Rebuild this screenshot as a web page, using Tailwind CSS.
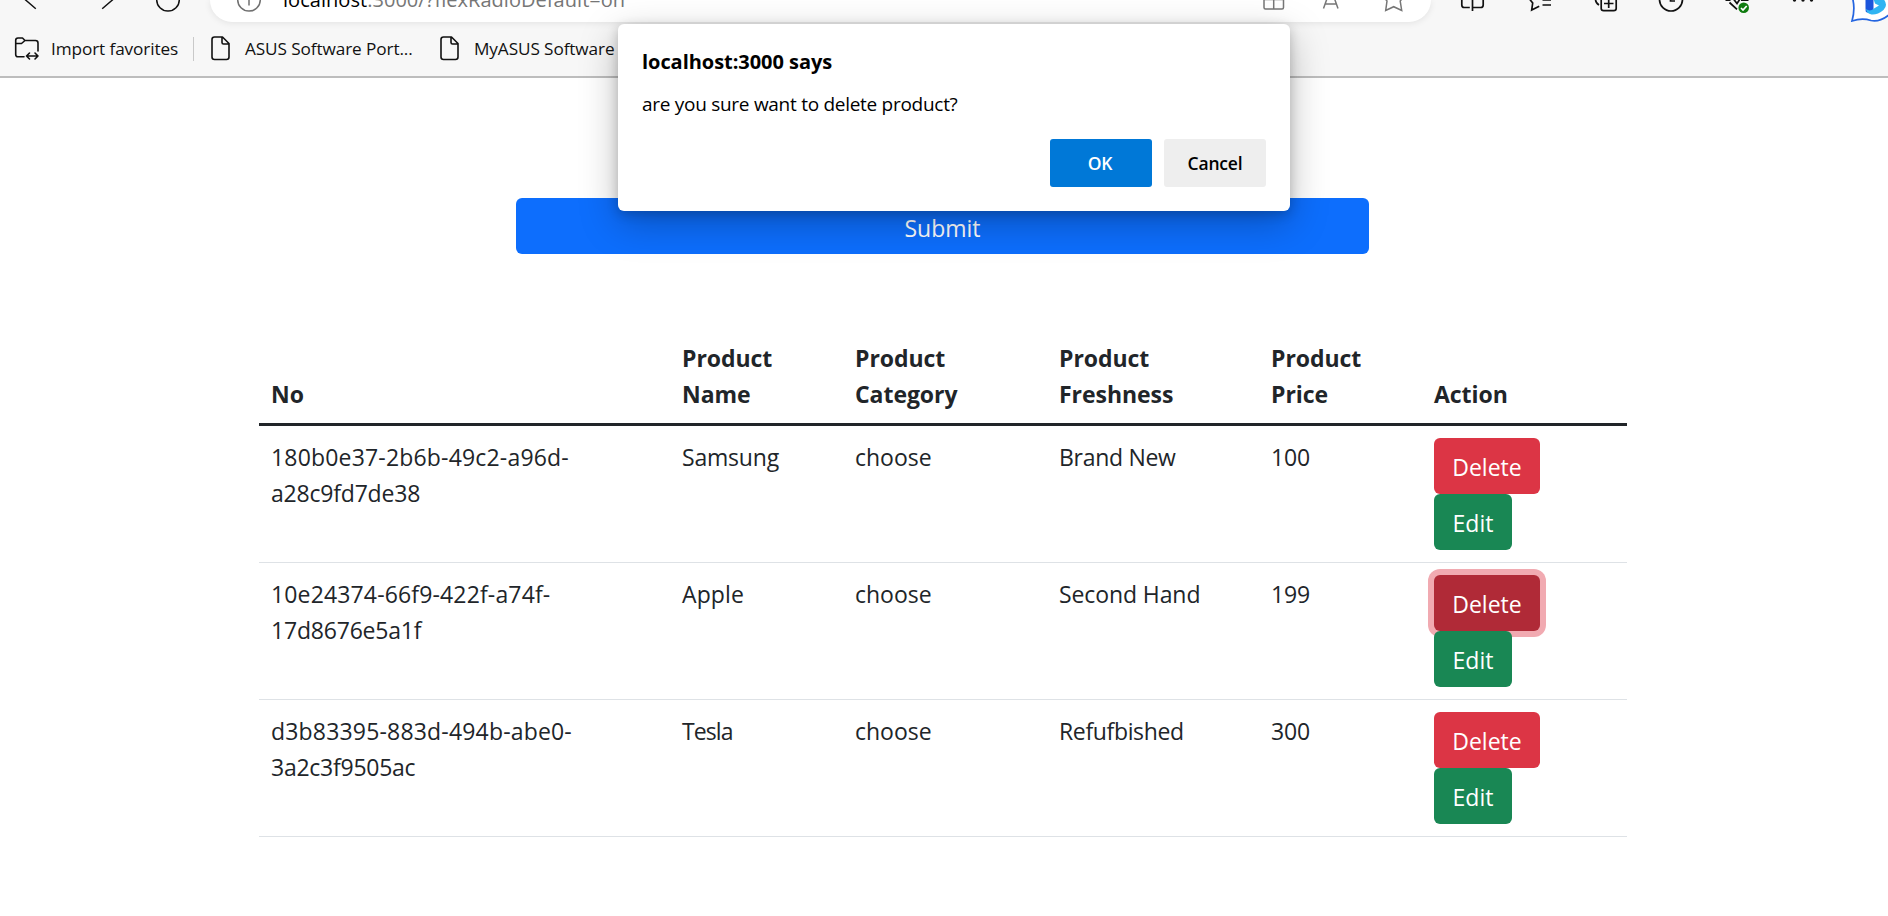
<!DOCTYPE html>
<html lang="en">
<head>
<meta charset="utf-8">
<title>Products</title>
<script src="https://cdn.jsdelivr.net/npm/@tailwindcss/browser@4"></script>
</head>
<body class="relative h-[916px] overflow-hidden bg-white font-['Open_Sans',sans-serif] text-[23px] leading-[36px] text-[#212529]">
<header class="h-[78px] border-b-2 border-[#bdbdbd] bg-[#f7f7f7]">
  <div class="flex h-[22px]">
    <svg class="h-[22px] w-[210px] shrink-0" viewBox="0 0 210 22" fill="none" stroke="#111" stroke-width="1.5"><path d="M25 -.5L35.8 8.7M113 -.5L102.2 8.7"/><circle cx="168" cy="-.2" r="11.3"/></svg>
    <div class="flex h-[22px] w-[1221px] shrink-0 rounded-b-[22px] bg-white shadow-[0_1px_7px_rgba(0,0,0,0.09)]">
      <svg class="h-[22px] w-[73px] shrink-0" viewBox="210 0 73 22" fill="none" stroke="#707070" stroke-width="1.5"><circle cx="249" cy="-.2" r="11.3"/><path d="M249 -1V5.5"/></svg>
      <div class="-mt-[15px] h-[30px] w-[960px] whitespace-nowrap text-[20px] leading-[30px] tracking-[0.04px] text-[#767676]"><span class="text-black">localhost</span>:3000/?flexRadioDefault=on</div>
      <svg class="h-[22px] w-[160px] shrink-0" viewBox="1243 0 160 22" fill="none" stroke="#767676" stroke-width="1.5"><path d="M1264 -2V7.5q0 1.5 1.5 1.5h16.5q1.5 0 1.5-1.5V-2M1273.700 -2V9M1264 -.5h19.500M1323.500 8.500L1329 -7M1338 8.500L1332.500 -7M1325.500 4h10.500M1384.500 -2l2.500 3-1.300 9.500 8-3.800 8 3.800-1.500-9.500 2.500-3"/></svg>
    </div>
    <svg class="h-[22px] w-[457px] shrink-0" viewBox="1431 0 457 22" fill="none" stroke="#111" stroke-width="1.700">
      <path d="M1461.800 -1V5q0 2.500 2.500 2.500h5.500M1483.200 -1V5q0 2.500-2.500 2.500h-7.500M1472.500 -1V11"/>
      <path d="M1529.500 -1l3.200 4-1 7 7.500-3.800M1542.500 5h8.500M1542.500 -.2h8.500"/>
      <path d="M1595.500 -1q0 4 3.500 6M1601.200 -1V8.500q0 2.200 2.500 2.200h10q2.500 0 2.500-2.200V-1M1608.700 -1v9M1604 3.500h9.500"/>
      <circle cx="1671" cy="-.5" r="11.500"/><path d="M1670.500 -1v2h4.500"/>
      <path d="M1725.500 .2h5M1733.500 -1l3.500 4.500 3-4.500M1741 .2h7.500M1729.500 2.500l7.500 6.800"/>
      <circle cx="1743.700" cy="7.800" r="5.300" fill="#107c10" stroke="none"/><path d="M1741 8l2 2 3.700-4" stroke="#fff"/>
      <g fill="#111" stroke="none"><circle cx="1794.500" cy="0" r="1.700"/><circle cx="1803" cy="0" r="1.700"/><circle cx="1811.500" cy="0" r="1.700"/></g>
      <path d="M1852.500 -2Q1855.500 9 1852 21Q1862 17.500 1871 20.500Q1880 22.500 1890 14V-2" fill="#fff" stroke="#2465e0"/>
      <path d="M1865.500 -1h8v11q-4 4-7.500 2-.5-1-.5-4z" fill="#1c55dc" stroke="none"/>
      <path d="M1866 9q4 3 8-.5l5-3-4-2-1.500-4.500h10q5 6 0 11-6 5-12 4.500-5-1-5.500-5.500z" fill="#2fb4f2" stroke="none"/>
    </svg>
  </div>
  <div class="flex h-[53px] items-center text-[17.200px] leading-[24px] tracking-[-0.100px] text-[#111]">
    <svg class="ml-[14px] h-[25px] w-[26px]" viewBox="14 36 26 25" fill="none" stroke="#111" stroke-width="1.600" stroke-linecap="round" stroke-linejoin="round"><path d="M24 56.800H18q-2.300 0-2.300-2.300V40.300q0-2.300 2.300-2.300h4.500l2.500 2.500h10.500q2.500 0 2.500 2.500v8M15.700 43.500h5.800l3.500-3M26.500 56h11.500M29.500 53l-3 3 3 3M35 53l3 3-3 3"/></svg>
    <span class="ml-[11px] w-[142px] whitespace-nowrap">Import favorites</span>
    <span class="h-6 w-px bg-[#c9c9c9]"></span>
    <svg class="ml-[17px] h-[25px] w-[20px]" viewBox="0 0 20 25" fill="none" stroke="#111" stroke-width="1.600" stroke-linejoin="round"><path d="M3.500 1h8l6.500 6.500v13.500q0 2.500-2.500 2.500h-12q-2.500 0-2.500-2.500V3.500q0-2.500 2.500-2.500zM11 1v5.500q0 1.500 1.500 1.500h5.500"/></svg>
    <span class="ml-[14px] w-[195px] whitespace-nowrap">ASUS Software Port...</span>
    <svg class="h-[25px] w-[20px]" viewBox="0 0 20 25" fill="none" stroke="#111" stroke-width="1.600" stroke-linejoin="round"><path d="M3.500 1h8l6.500 6.500v13.500q0 2.500-2.500 2.500h-12q-2.500 0-2.500-2.500V3.500q0-2.500 2.500-2.500zM11 1v5.500q0 1.500 1.500 1.500h5.500"/></svg>
    <span class="ml-[14px] whitespace-nowrap">MyASUS Software</span>
  </div>
</header>

<main class="pt-[120px]">
  <button class="ml-[516px] block h-[56px] w-[853px] rounded-[6px] bg-[#0d6efd] pt-[3px] text-white">Submit</button>
  <table class="mt-[80px] ml-[259px] w-[1368px] table-fixed border-collapse text-left">
    <colgroup><col class="w-[411px]"><col class="w-[173px]"><col class="w-[204px]"><col class="w-[212px]"><col class="w-[163px]"><col class="w-[205px]"></colgroup>
    <thead>
      <tr class="h-[90px] border-b-[3px] border-[#212529] align-bottom tracking-[-0.050px]">
        <th class="px-3 pb-[11px]">No</th><th class="px-3 pb-[11px]">Product<br>Name</th><th class="px-3 pb-[11px]">Product<br>Category</th><th class="px-3 pb-[11px]">Product<br>Freshness</th><th class="px-3 pb-[11px]">Product<br>Price</th><th class="px-3 pb-[11px]">Action</th>
      </tr>
    </thead>
    <tbody class="align-top">
      <tr class="h-[138px] border-b border-[#dee2e6]">
        <td class="px-3 pt-[13px]"><span class="tracking-[0.180px]">180b0e37-2b6b-49c2-a96d-</span><br><span class="tracking-[-0.200px]">a28c9fd7de38</span></td><td class="px-3 pt-[13px] tracking-[-0.200px]">Samsung</td><td class="px-3 pt-[13px]">choose</td><td class="px-3 pt-[13px] tracking-[-0.300px]">Brand New</td><td class="px-3 pt-[13px] tracking-[-0.200px]">100</td>
        <td class="px-3 pt-3"><button class="block h-[56px] w-[106px] rounded-[6px] bg-[#dc3545] pt-[2px] text-white">Delete</button><button class="block h-[56px] w-[78px] rounded-[6px] bg-[#198754] pt-[2px] text-white">Edit</button></td>
      </tr>
      <tr class="h-[137px] border-b border-[#dee2e6]">
        <td class="px-3 pt-[13px]"><span class="tracking-[0.150px]">10e24374-66f9-422f-a74f-</span><br><span class="tracking-[-0.200px]">17d8676e5a1f</span></td><td class="px-3 pt-[13px] tracking-[0.100px]">Apple</td><td class="px-3 pt-[13px]">choose</td><td class="px-3 pt-[13px] tracking-[-0.100px]">Second Hand</td><td class="px-3 pt-[13px] tracking-[-0.200px]">199</td>
        <td class="px-3 pt-3"><button class="block h-[56px] w-[106px] rounded-[6px] bg-[#b02a37] pt-[2px] text-white shadow-[0_0_0_6px_#f1aab1]">Delete</button><button class="relative block h-[56px] w-[78px] rounded-[6px] bg-[#198754] pt-[2px] text-white">Edit</button></td>
      </tr>
      <tr class="h-[137px] border-b border-[#dee2e6]">
        <td class="px-3 pt-[13px]"><span class="tracking-[0.180px]">d3b83395-883d-494b-abe0-</span><br><span class="tracking-[-0.250px]">3a2c3f9505ac</span></td><td class="px-3 pt-[13px] tracking-[-0.900px]">Tesla</td><td class="px-3 pt-[13px]">choose</td><td class="px-3 pt-[13px] tracking-[-0.350px]">Refufbished</td><td class="px-3 pt-[13px] tracking-[-0.200px]">300</td>
        <td class="px-3 pt-3"><button class="block h-[56px] w-[106px] rounded-[6px] bg-[#dc3545] pt-[2px] text-white">Delete</button><button class="block h-[56px] w-[78px] rounded-[6px] bg-[#198754] pt-[2px] text-white">Edit</button></td>
      </tr>
    </tbody>
  </table>
</main>

<div role="dialog" class="absolute top-[24px] left-[618px] flex h-[187px] w-[672px] flex-col rounded-[6px] bg-white px-6 pt-[24px] text-black shadow-[0_12px_38px_rgba(0,0,0,0.26),0_3px_12px_rgba(0,0,0,0.2)]">
  <div class="h-[28px] text-[20px] leading-[28px] font-bold tracking-[-0.050px]">localhost:3000 says</div>
  <div class="mt-[14px] text-[19px] leading-[28px] tracking-[-0.280px]">are you sure want to delete product?</div>
  <div class="mt-[21px] flex justify-end gap-3 text-[17.500px] leading-[24px] font-semibold tracking-[-0.200px]">
    <button class="h-[48px] w-[102px] rounded-[3px] bg-[#0078d7] pr-[2px] text-white">OK</button>
    <button class="h-[48px] w-[102px] rounded-[3px] bg-[#eee]">Cancel</button>
  </div>
</div>
</body>
</html>
